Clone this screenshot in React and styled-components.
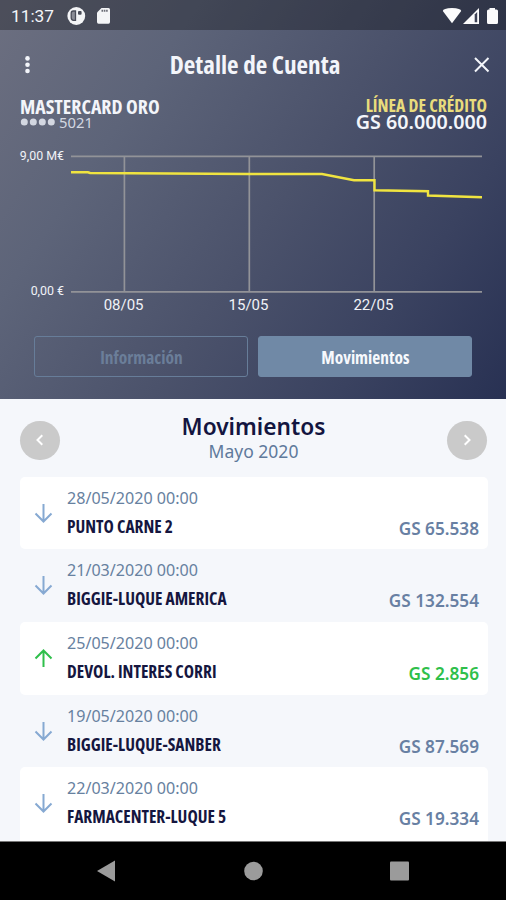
import React from 'react'
import styled, { createGlobalStyle } from 'styled-components'

const GlobalStyle = createGlobalStyle`
  * {
    box-sizing: border-box;
  }

  body {
    margin: 0;
    background: #000;
    font-family: 'Noto Sans', 'Open Sans', sans-serif;
  }
`

const Phone = styled.div`
  display: flex;
  flex-direction: column;
  width: 506px;
  height: 900px;
  overflow: hidden;
`

const Header = styled.header`
  flex: none;
  height: 399px;
  color: #f3f5fa;
  background: linear-gradient(124deg, #6c6f80 0%, #5d6479 26%, #4b526b 54%, #3a4260 78%, #283153 100%);
`

const StatusBar = styled.div`
  display: flex;
  align-items: center;
  height: 30px;
  padding: 1px 8px 0 11px;
  background: rgba(0, 0, 0, 0.29);
  font: 17.3px/30px Roboto, sans-serif;
`

const Clock = styled.span`
  width: 55px;
`

const StatusIcons = styled.svg`
  display: block;
  margin-left: ${p => (p.$end ? 'auto' : 0)};
`

const TitleBar = styled.div`
  display: grid;
  grid-template-columns: 24px 1fr 24px;
  align-items: center;
  height: 69px;
  padding: 0 12px 0 16px;
`

const Condensed = styled.span`
  font-family: 'Open Sans', 'Noto Sans', sans-serif;
  font-stretch: 75%;
  font-weight: 700;
  white-space: nowrap;
`

const Title = styled(Condensed).attrs({ as: 'h1' })`
  margin: -2px 0 0;
  font-size: 25.2px;
  text-align: center;
`

const Account = styled.div`
  display: flex;
  justify-content: space-between;
  height: 47px;
  padding: 0 19px 0 20px;
`

const AccountSide = styled.div`
  display: flex;
  flex-direction: column;
  align-items: ${p => (p.$right ? 'flex-end' : 'flex-start')};
`

const CardName = styled(Condensed)`
  height: 15px;
  font-size: 19.8px;
  line-height: 16px;
`

const CreditLabel = styled(Condensed)`
  height: 14px;
  color: #e9dc7c;
  font-size: 17.7px;
  line-height: 12px;
`

const CardNumber = styled.span`
  display: flex;
  align-items: center;
  gap: 4px;
  color: #d3d7e1;
  font-size: 14.8px;
  line-height: 16px;
`

const CreditAmount = styled.span`
  font-size: 19.7px;
  font-weight: 600;
  line-height: 17px;
`

const Chart = styled.svg`
  display: block;
  font-family: Roboto, sans-serif;
  fill: #f0f2f7;

  .grid {
    stroke: #929398;
    stroke-width: 1.7;
  }

  .balance {
    fill: none;
    stroke: #f0e440;
    stroke-width: 2.4;
  }
`

const Tabs = styled.div`
  display: grid;
  grid-template-columns: 214px 214px;
  gap: 10px;
  padding: 16px 0 0 34.4px;
`

const Tab = styled.button`
  height: 41px;
  padding: 0;
  border: 1.5px solid ${p => (p.$active ? '#7089a6' : '#677d99')};
  border-radius: 3px;
  background: ${p => (p.$active ? '#7089a6' : 'transparent')};
  color: ${p => (p.$active ? '#f7f9fd' : '#6b7e99')};
  font-size: 17.4px;
`

const Content = styled.main`
  display: flex;
  flex: 1;
  flex-direction: column;
  min-height: 0;
  overflow: hidden;
  background: #f5f7fb;
`

const MonthBar = styled.div`
  display: flex;
  flex: none;
  align-items: center;
  justify-content: space-between;
  height: 77.5px;
  padding: 5px 19px 0 20px;
`

const RoundButton = styled.button`
  display: flex;
  align-items: center;
  justify-content: center;
  width: 39.5px;
  height: 39.5px;
  padding: 0;
  border: 0;
  border-radius: 50%;
  background: #cacaca;
`

const Month = styled.div`
  margin-top: -3px;
  color: #5f7a9c;
  font-size: 17.5px;
  line-height: 24px;
  text-align: center;

  h2 {
    margin: 0;
    color: #131540;
    font-size: 22.7px;
    font-weight: 600;
    line-height: 25px;
  }
`

const Row = styled.div`
  display: flex;
  flex: none;
  height: 72.7px;
  margin: 0 18px 0 20px;
  padding: 0 9px 0 14px;
  border-radius: 5px;
  background: ${p => (p.$filled ? '#fff' : 'transparent')};

  &:last-child {
    height: 80px;
  }
`

const Arrow = styled.svg`
  width: 19px;
  height: 72px;
  margin-right: 14px;
  fill: none;
  stroke: ${p => (p.$credit ? '#2fbf4b' : '#86a9d2')};
  stroke-width: 2;
`

const Details = styled.div`
  display: flex;
  flex: 1;
  flex-direction: column;
  padding-top: 11px;
`

const DateText = styled.span`
  color: #6781a0;
  font-size: 16.1px;
  line-height: 21px;
`

const Merchant = styled(Condensed)`
  margin-top: 7px;
  color: #15163f;
  font-size: 17.4px;
  line-height: 21px;
`

const Amount = styled.span`
  padding-top: 41px;
  color: ${p => (p.$credit ? '#2fbf4b' : '#6880a3')};
  font-size: 17.2px;
  font-weight: 600;
  line-height: 22px;
`

const NavBar = styled.nav`
  flex: none;
  height: 59px;
  border-top: 1px solid #777;
  background: #000;
`

const movements = [
  { date: '28/05/2020 00:00', merchant: 'PUNTO CARNE 2', amount: 'GS 65.538' },
  { date: '21/03/2020 00:00', merchant: 'BIGGIE-LUQUE AMERICA', amount: 'GS 132.554' },
  { date: '25/05/2020 00:00', merchant: 'DEVOL. INTERES CORRI', amount: 'GS 2.856', credit: true },
  { date: '19/05/2020 00:00', merchant: 'BIGGIE-LUQUE-SANBER', amount: 'GS 87.569' },
  { date: '22/03/2020 00:00', merchant: 'FARMACENTER-LUQUE 5', amount: 'GS 19.334' }
]

const ticks = [
  { x: 124.4, label: '08/05' },
  { x: 249.3, label: '15/05' },
  { x: 374.2, label: '22/05' }
]

function BalanceChart() {
  return (
    <Chart width="506" height="174" viewBox="0 146 506 174">
      <path className="grid" d="M71 156.4H482M71 291.8H482" />
      {ticks.map(({ x, label }) => (
        <g key={label}>
          <line className="grid" x1={x} y1="156" x2={x} y2="292" />
          <text x={x - 0.8} y="309.7" fontSize="15" textAnchor="middle">
            {label}
          </text>
        </g>
      ))}
      <text x="64" y="159.7" fontSize="12.4" textAnchor="end">9,00 M€</text>
      <text x="64" y="295" fontSize="12.4" textAnchor="end">0,00 €</text>
      <path
        className="balance"
        d="M71 172.3H88L90 173L249 174H322L354 180.3H374.5V190.3L428 191.3V195.5L482 197.2"
      />
    </Chart>
  )
}

function Movement({ date, merchant, amount, credit, filled }) {
  return (
    <Row $filled={filled}>
      <Arrow $credit={credit} viewBox="0 0 19 72">
        <path d={credit ? 'M9.5 45V28M1.5 36.5L9.5 28.5L17.5 36.5' : 'M9.5 27V45M1.5 36.5L9.5 44.5L17.5 36.5'} />
      </Arrow>
      <Details>
        <DateText>{date}</DateText>
        <Merchant>{merchant}</Merchant>
      </Details>
      <Amount $credit={credit}>{amount}</Amount>
    </Row>
  )
}

export default function App() {
  return (
    <Phone>
      <GlobalStyle />
      <Header>
        <StatusBar>
          <Clock>11:37</Clock>
          <StatusIcons width="46" height="30" viewBox="66 0 46 30" fill="#f4f5f7">
            <circle cx="76.3" cy="15" r="8.9" />
            <path
              d="M75.5 10H73.2Q71.2 10 71.2 12.5V16.5Q71.2 19.3 73.5 19.3H75.5Z"
              fill="#8b8d96"
              stroke="#4a4d59"
              strokeWidth="1.3"
            />
            <rect x="78" y="10" width="3.6" height="3.8" rx="1" fill="#4a4d59" />
            <path d="M101.5 7H108.5Q110 7 110 8.5V21Q110 22.7 108.5 22.7H98.5Q97 22.7 97 21V11.5Z" />
            <path d="M101.5 9.7H108" stroke="#6b6d77" strokeWidth="2" strokeDasharray="1.6 0.7" />
          </StatusIcons>
          <StatusIcons $end width="58" height="30" viewBox="440 0 58 30" fill="#fbfbfc">
            <path d="M442.8 10Q443 7.3 452 7Q461 7.3 461.2 10L452 22.3Z" />
            <path d="M479 7V23H463Z" />
            <path d="M474.7 13.5L477.2 11V21.3H474.7Z" fill="#3c4155" />
            <path d="M489.5 7H495V8.5H496.5Q498 8.5 498 10V21.5Q498 23 496.5 23H488.5Q487 23 487 21.5V10Q487 8.5 488.5 8.5H489.5Z" />
          </StatusIcons>
        </StatusBar>
        <TitleBar>
          <svg width="24" height="24" viewBox="0 0 24 24" fill="#f3f5fa">
            <circle cx="11.5" cy="5.4" r="2.3" />
            <circle cx="11.5" cy="11.7" r="2.3" />
            <circle cx="11.5" cy="18" r="2.3" />
          </svg>
          <Title>Detalle de Cuenta</Title>
          <svg width="24" height="24" viewBox="0 0 24 24" fill="none" stroke="#f3f5fa" strokeWidth="2">
            <path d="M5 5L18.5 18.5M18.5 5L5 18.5" />
          </svg>
        </TitleBar>
        <Account>
          <AccountSide>
            <CardName>MASTERCARD ORO</CardName>
            <CardNumber>
              <svg width="35" height="8" viewBox="0 0 35 8" fill="#d3d7e1">
                <circle cx="4.3" cy="4" r="3.5" />
                <circle cx="13.3" cy="4" r="3.5" />
                <circle cx="22.3" cy="4" r="3.5" />
                <circle cx="31.3" cy="4" r="3.5" />
              </svg>
              5021
            </CardNumber>
          </AccountSide>
          <AccountSide $right>
            <CreditLabel>LÍNEA DE CRÉDITO</CreditLabel>
            <CreditAmount>GS 60.000.000</CreditAmount>
          </AccountSide>
        </Account>
        <BalanceChart />
        <Tabs>
          <Tab>
            <Condensed>Información</Condensed>
          </Tab>
          <Tab $active>
            <Condensed>Movimientos</Condensed>
          </Tab>
        </Tabs>
      </Header>
      <Content>
        <MonthBar>
          <RoundButton aria-label="Mes anterior">
            <svg width="12" height="14" viewBox="0 0 12 14" fill="none" stroke="#fff" strokeWidth="2">
              <path d="M8.3 2.3L3.5 7L8.3 11.7" />
            </svg>
          </RoundButton>
          <Month>
            <h2>Movimientos</h2>
            Mayo 2020
          </Month>
          <RoundButton aria-label="Mes siguiente">
            <svg width="12" height="14" viewBox="0 0 12 14" fill="none" stroke="#fff" strokeWidth="2">
              <path d="M3.7 2.3L8.5 7L3.7 11.7" />
            </svg>
          </RoundButton>
        </MonthBar>
        {movements.map((movement, i) => (
          <Movement key={movement.merchant} filled={i % 2 === 0} {...movement} />
        ))}
      </Content>
      <NavBar>
        <svg width="506" height="58" viewBox="0 842 506 58" fill="#9b9b9b">
          <path d="M97 871L115 860.5V881.5Z" />
          <circle cx="253.5" cy="871" r="9.3" />
          <rect x="390" y="861.5" width="19" height="19" rx="1" />
        </svg>
      </NavBar>
    </Phone>
  )
}
